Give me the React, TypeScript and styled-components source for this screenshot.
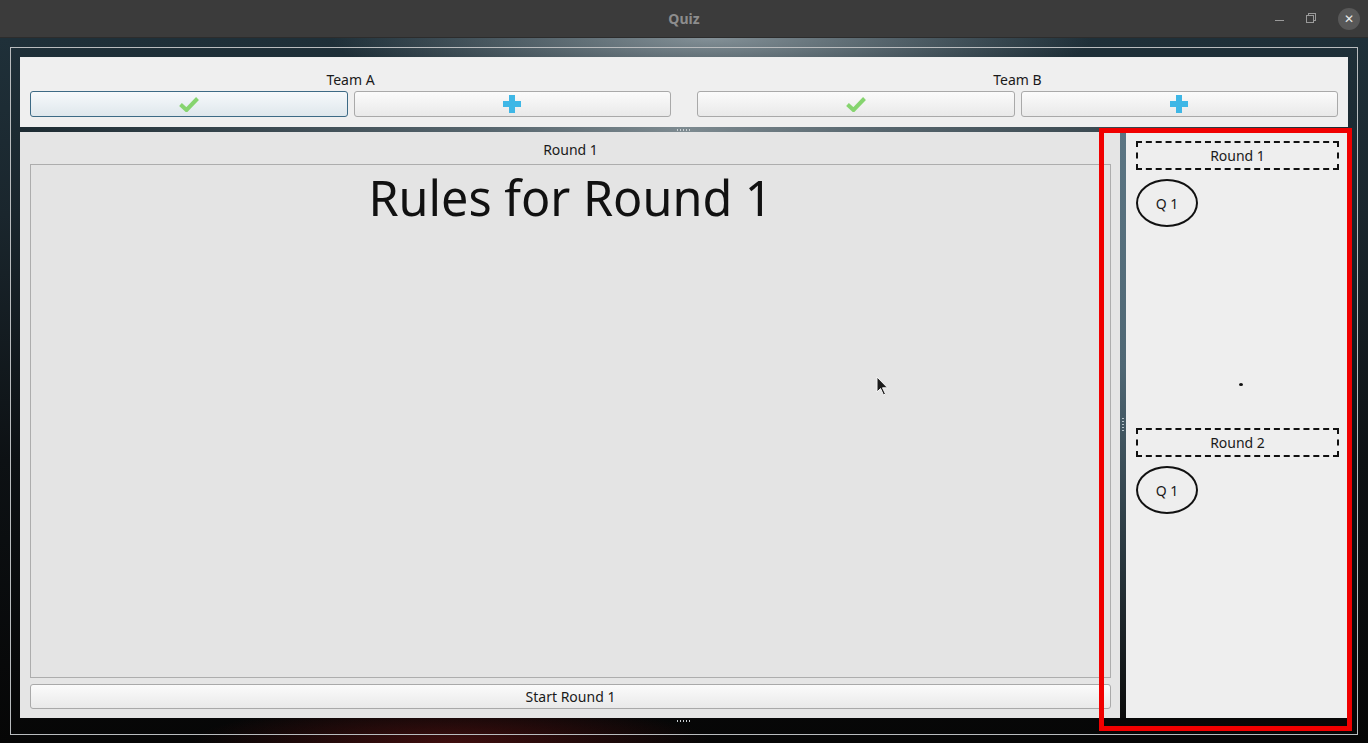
import styled, { createGlobalStyle } from 'styled-components';

const GlobalStyle = createGlobalStyle`
  html, body {
    margin: 0;
    padding: 0;
    overflow: hidden;
  }
  body {
    font-family: 'Noto Sans', 'DejaVu Sans', sans-serif;
    font-size: 14px;
    color: #1a1a1a;
  }
`;

const CheckIcon = () => (
  <svg width="20" height="16" viewBox="0 0 20 16">
    <path d="M1.5 8.5 L7.5 14 L18.5 2.5" fill="none" stroke="#86d46f" strokeWidth="4" strokeLinejoin="miter" />
  </svg>
);

const PlusIcon = () => (
  <svg width="20" height="20" viewBox="0 0 20 20">
    <path d="M7 1 H13 V7 H19 V13 H13 V19 H7 V13 H1 V7 H7 Z" fill="#3fb7e6" />
  </svg>
);

const Cursor = () => (
  <svg width="14" height="20" viewBox="0 0 14 20">
    <path d="M1 1 L1 16 L4.5 12.5 L7.5 19 L9.5 18 L6.5 11.8 L11.5 11.8 Z" fill="#1b1b1b" stroke="#f4f4f4" strokeWidth="1" />
  </svg>
);

const teams = ['Team A', 'Team B'];

const rounds = [
  { name: 'Round 1', questions: ['Q 1'] },
  { name: 'Round 2', questions: ['Q 1'] },
];

export default function App() {
  return (
    <>
      <GlobalStyle />
      <Screen>
        <TitleBar>
          <Title>Quiz</Title>
          <Controls>
            <MinBtn />
            <MaxBtn />
            <CloseBtn>✕</CloseBtn>
          </Controls>
        </TitleBar>
        <Desktop>
          <Frame>
            <TopPanel>
              {teams.map((team, i) => (
                <TeamGroup key={team}>
                  <TeamLabel>{team}</TeamLabel>
                  <ButtonRow>
                    <ToolButton $focused={i === 0}>
                      <CheckIcon />
                    </ToolButton>
                    <ToolButton>
                      <PlusIcon />
                    </ToolButton>
                  </ButtonRow>
                </TeamGroup>
              ))}
            </TopPanel>
            <HSplitter>
              <Grip />
            </HSplitter>
            <Main>
              <LeftPanel>
                <SectionLabel>Round 1</SectionLabel>
                <RulesBox>
                  <RulesTitle>Rules for Round 1</RulesTitle>
                </RulesBox>
                <WideButton>Start Round 1</WideButton>
              </LeftPanel>
              <VSplitter>
                <VGrip />
              </VSplitter>
              <RightPanel>
                {rounds.map((round) => (
                  <RoundSection key={round.name}>
                    <RoundHeader>{round.name}</RoundHeader>
                    {round.questions.map((q) => (
                      <QuestionBubble key={q}>{q}</QuestionBubble>
                    ))}
                  </RoundSection>
                ))}
                <Dot />
              </RightPanel>
            </Main>
            <BottomHandle>
              <Grip />
            </BottomHandle>
          </Frame>
          <Highlight />
          <PointerWrap>
            <Cursor />
          </PointerWrap>
        </Desktop>
      </Screen>
    </>
  );
}

const Screen = styled.div`
  width: 1368px;
  height: 743px;
  display: flex;
  flex-direction: column;
  background: #0a0b0c;
`;

const TitleBar = styled.div`
  position: relative;
  height: 38px;
  flex-shrink: 0;
  display: flex;
  align-items: center;
  justify-content: center;
  background: #3b3b3b;
  border-bottom: 1px solid #2c2c2c;
  box-sizing: border-box;
`;

const Title = styled.span`
  font-family: 'Noto Sans', sans-serif;
  font-weight: 700;
  font-size: 14px;
  color: #8d8d8d;
`;

const Controls = styled.div`
  position: absolute;
  right: 8px;
  top: 0;
  height: 100%;
  display: flex;
  align-items: center;
  gap: 22px;
`;

const MinBtn = styled.span`
  width: 9px;
  height: 1px;
  margin-top: 4px;
  background: #9a9a9a;
`;

const MaxBtn = styled.span`
  width: 6px;
  height: 6px;
  border: 1px solid #9a9a9a;
  box-shadow: 2px -2px 0 -1px #3b3b3b, 2px -2px 0 0 #9a9a9a;
  margin-right: 2px;
`;

const CloseBtn = styled.span`
  width: 22px;
  height: 22px;
  border-radius: 50%;
  background: #585858;
  color: #e8e8e8;
  font-size: 12px;
  display: flex;
  align-items: center;
  justify-content: center;
`;

const Desktop = styled.div`
  position: relative;
  flex: 1;
  padding: 9px 10px 8px 10px;
  box-sizing: border-box;
  background:
    radial-gradient(ellipse 380px 60px at 52% 0%, rgba(150, 162, 168, 0.85), rgba(150, 162, 168, 0) 100%),
    radial-gradient(ellipse 260px 40px at 33% 100%, rgba(110, 20, 20, 0.55), rgba(110, 20, 20, 0) 100%),
    linear-gradient(180deg, #1f3039 0%, #1a262d 25%, #0d1114 60%, #060606 100%);
`;

const Frame = styled.div`
  height: 100%;
  box-sizing: border-box;
  border: 1px solid #b9bcbe;
  padding: 9px 9px 0 9px;
  display: flex;
  flex-direction: column;
`;

const TopPanel = styled.div`
  height: 70px;
  flex-shrink: 0;
  background: #efefef;
  box-sizing: border-box;
  padding: 13px 10px 0 10px;
  display: flex;
  gap: 26px;
`;

const TeamGroup = styled.div`
  flex: 1;
  display: flex;
  flex-direction: column;
  align-items: center;
  gap: 3px;
`;

const TeamLabel = styled.div`
  height: 18px;
  line-height: 20px;
`;

const ButtonRow = styled.div`
  width: 100%;
  display: flex;
  gap: 6px;
`;

const ToolButton = styled.div<{ $focused?: boolean }>`
  flex: 1;
  height: 26px;
  box-sizing: border-box;
  border-radius: 3px;
  border: 1px solid ${({ $focused }) => ($focused ? '#3d6a85' : '#a9a9a9')};
  background: ${({ $focused }) =>
    $focused ? 'linear-gradient(180deg, #f6f9fb 0%, #dfe7ec 100%)' : 'linear-gradient(180deg, #fbfbfb 0%, #e9e9e9 100%)'};
  display: flex;
  align-items: center;
  justify-content: center;
`;

const HSplitter = styled.div`
  height: 5px;
  flex-shrink: 0;
  display: flex;
  align-items: center;
  justify-content: center;
  background: linear-gradient(90deg, #1d2b32 0%, #56656d 35%, #7d8a90 50%, #56656d 65%, #1d2b32 100%);
`;

const Grip = styled.span`
  width: 16px;
  height: 2px;
  background-image: radial-gradient(circle, #c9cfd2 0.8px, transparent 1px);
  background-size: 3px 2px;
`;

const VGrip = styled.span`
  width: 2px;
  height: 16px;
  background-image: radial-gradient(circle, #b5c2c9 0.8px, transparent 1px);
  background-size: 2px 3px;
`;

const Main = styled.div`
  flex: 1;
  display: flex;
  min-height: 0;
`;

const LeftPanel = styled.div`
  width: 1100px;
  flex-shrink: 0;
  background: #e5e5e5;
  box-sizing: border-box;
  padding: 0 9px 9px 10px;
  display: flex;
  flex-direction: column;
`;

const SectionLabel = styled.div`
  height: 32px;
  line-height: 35px;
  text-align: center;
`;

const RulesBox = styled.div`
  flex: 1;
  border: 1px solid #adadad;
  background: #e4e4e4;
  display: flex;
  justify-content: center;
`;

const RulesTitle = styled.h1`
  margin: 0;
  font-family: 'Noto Sans', sans-serif;
  font-weight: 400;
  font-size: 48.5px;
  line-height: 64px;
  color: #111;
`;

const WideButton = styled.div`
  margin-top: 6px;
  height: 25px;
  box-sizing: border-box;
  border: 1px solid #a9a9a9;
  border-radius: 3px;
  background: linear-gradient(180deg, #fbfbfb 0%, #e9e9e9 100%);
  display: flex;
  align-items: center;
  justify-content: center;
`;

const VSplitter = styled.div`
  width: 6px;
  flex-shrink: 0;
  display: flex;
  align-items: center;
  justify-content: center;
  background: linear-gradient(180deg, #5b7583 0%, #4f6774 40%, #26333a 75%, #0c0c0c 100%);
`;

const RightPanel = styled.div`
  position: relative;
  flex: 1;
  background: #eeeeee;
  box-sizing: border-box;
  padding: 9px 9px 0 10px;
  display: flex;
  flex-direction: column;
  gap: 9px;
`;

const RoundSection = styled.div`
  height: 278px;
  display: flex;
  flex-direction: column;
  align-items: flex-start;
  gap: 9px;
`;

const RoundHeader = styled.div`
  width: 100%;
  height: 29px;
  box-sizing: border-box;
  border: 2px dashed #111;
  display: flex;
  align-items: center;
  justify-content: center;
`;

const QuestionBubble = styled.div`
  width: 62px;
  height: 48px;
  box-sizing: border-box;
  border: 2px solid #111;
  border-radius: 31px / 24px;
  display: flex;
  align-items: center;
  justify-content: center;
`;

const Dot = styled.span`
  position: absolute;
  left: 113px;
  top: 251px;
  width: 4px;
  height: 3px;
  border-radius: 50%;
  background: #111;
`;

const BottomHandle = styled.div`
  height: 16px;
  flex-shrink: 0;
  display: flex;
  justify-content: center;
  padding-top: 2px;
  box-sizing: border-box;
`;

const Highlight = styled.div`
  position: absolute;
  left: 1099px;
  top: 90px;
  width: 253px;
  height: 603px;
  box-sizing: border-box;
  border: 5px solid #f00000;
  pointer-events: none;
`;

const PointerWrap = styled.div`
  position: absolute;
  left: 876px;
  top: 338px;
  pointer-events: none;
`;
